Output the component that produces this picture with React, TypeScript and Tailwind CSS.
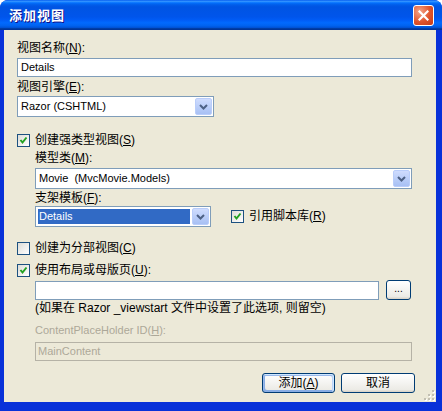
import type { ReactNode } from "react";

const ui = "font-['Liberation_Sans','Noto_Sans_CJK_SC',sans-serif]";

function Acc({ k }: { k: string }) {
  return <span className="underline underline-offset-[1px]">{k}</span>;
}

function Check({ checked }: { checked?: boolean }) {
  return (
    <span className="w-[13px] h-[13px] shrink-0 border border-[#1c5180] bg-[linear-gradient(135deg,#dcdcd7,#ffffff)] flex items-center justify-center">
      {checked && (
        <svg width="9" height="9" viewBox="0 0 9 9">
          <path d="M1.5 4 L3.5 6.5 L7.5 1.5" stroke="#21a121" strokeWidth="2" fill="none" />
        </svg>
      )}
    </span>
  );
}

function DropButton() {
  return (
    <span className="w-[17px] h-full shrink-0 rounded-[2px] border border-[#b9cdfa] bg-[linear-gradient(180deg,#cfdcfe,#b9cdf8_55%,#a8c0f4)] flex items-center justify-center">
      <svg width="9" height="6" viewBox="0 0 9 6">
        <path d="M1 1 L4.5 4.5 L8 1" stroke="#4d6185" strokeWidth="2" fill="none" />
      </svg>
    </span>
  );
}

function Select({ value, width, selected }: { value: string; width: string; selected?: boolean }) {
  return (
    <div className={`${width} h-[21px] border border-[#7f9db9] bg-white flex p-[1px] shrink-0`}>
      <div className="flex-1 flex items-center pl-[1px] pr-[2px] min-w-0">
        <span
          className={`flex-1 h-[15px] flex items-center text-[11px] pl-[1px] whitespace-pre ${
            selected ? "bg-[#316ac5] text-white" : "text-black"
          }`}
        >
          {value}
        </span>
      </div>
      <DropButton />
    </div>
  );
}

function Label({ children, muted }: { children: ReactNode; muted?: boolean }) {
  return (
    <div className={`h-[16px] leading-[16px] text-[12px] ${muted ? "text-[#aca899]" : "text-black"}`}>
      {children}
    </div>
  );
}

function CheckRow({ checked, children }: { checked?: boolean; children: ReactNode }) {
  return (
    <div className="h-[16px] flex items-center gap-[5px] text-[12px] text-black">
      <Check checked={checked} />
      <span className="leading-[16px]">{children}</span>
    </div>
  );
}

function Button({ children, primary }: { children: ReactNode; primary?: boolean }) {
  return (
    <button
      className={`h-[20px] rounded-[3px] border border-[#003c74] bg-[linear-gradient(180deg,#ffffff,#ecebe6_86%,#d6d0c5)] text-[12px] text-black leading-none flex items-center justify-center ${
        primary
          ? "w-[73px] shadow-[inset_-1px_1px_#cee7ff,inset_1px_2px_#98b8ea,inset_-2px_2px_#bcd4f6,inset_1px_-1px_#89ade4,inset_2px_-2px_#89ade4]"
          : "w-[74px]"
      }`}
    >
      {children}
    </button>
  );
}

export default function App() {
  return (
    <div className={`${ui} w-[442px] h-[411px] flex flex-col bg-[#0831d9] rounded-t-[8px] overflow-hidden select-none`}>
      {/* Title bar */}
      <div className="h-[30px] shrink-0 flex items-center justify-between pl-[9px] pr-[8px] bg-[linear-gradient(180deg,#0058ee_0%,#3593ff_4%,#288eff_6%,#127dff_8%,#036ffc_10%,#0262ee_14%,#0057e5_20%,#0054e3_24%,#0055eb_56%,#005bf5_66%,#026afe_76%,#0062ef_86%,#0052d6_92%,#0040ab_94%,#003092_100%)]">
        <span className="text-white font-bold text-[13px] tracking-[1px] [text-shadow:1px_1px_#0f1089] mt-[1px]">
          添加视图
        </span>
        <span className="w-[21px] h-[21px] rounded-[3px] border border-white bg-[radial-gradient(circle_at_30%_30%,#f3a58a,#e0542c_55%,#c53a16)] flex items-center justify-center mb-[-1px]">
          <svg width="11" height="11" viewBox="0 0 11 11">
            <path d="M1.5 1.5 L9.5 9.5 M9.5 1.5 L1.5 9.5" stroke="white" strokeWidth="2.2" strokeLinecap="square" />
          </svg>
        </span>
      </div>

      {/* Body */}
      <div className="relative flex-1 ml-[4px] mr-[6px] mb-[9px] bg-[#ece9d8] pl-[13px] pr-[24px] pt-[10px] flex flex-col">
        <Label>
          视图名称(<Acc k="N" />):
        </Label>
        <div className="mt-[2px] h-[19px] border border-[#7f9db9] bg-white flex items-center pl-[3px] text-[11px] text-black">
          Details
        </div>
        <div className="mt-[2px]">
          <Label>
            视图引擎(<Acc k="E" />):
          </Label>
        </div>
        <div className="mt-[1px]">
          <Select value="Razor (CSHTML)" width="w-[197px]" />
        </div>

        <div className="mt-[15px]">
          <CheckRow checked>
            创建强类型视图(<Acc k="S" />)
          </CheckRow>
        </div>

        <div className="ml-[18px] flex flex-col">
          <div className="mt-[2px]">
            <Label>
              模型类(<Acc k="M" />):
            </Label>
          </div>
          <div className="mt-[2px]">
            <Select value="Movie  (MvcMovie.Models)" width="w-full" />
          </div>
          <div className="mt-[1px]">
            <Label>
              支架模板(<Acc k="F" />):
            </Label>
          </div>
          <div className="flex items-center">
            <Select value="Details" width="w-[176px]" selected />
            <div className="ml-[20px] mt-[-1px]">
              <CheckRow checked>
                引用脚本库(<Acc k="R" />)
              </CheckRow>
            </div>
          </div>
        </div>

        <div className="mt-[13px]">
          <CheckRow>
            创建为分部视图(<Acc k="C" />)
          </CheckRow>
        </div>
        <div className="mt-[6px]">
          <CheckRow checked>
            使用布局或母版页(<Acc k="U" />):
          </CheckRow>
        </div>

        <div className="ml-[18px] flex flex-col">
          <div className="mt-[2px] h-[20px] flex items-center">
            <div className="w-[344px] h-[19px] border border-[#7f9db9] bg-white" />
            <button className="ml-[7px] w-[25px] h-[20px] rounded-[3px] border border-[#003c74] bg-[linear-gradient(180deg,#ffffff,#ecebe6_86%,#d6d0c5)] text-[10px] text-black leading-none pb-[3px]">
              ...
            </button>
          </div>
          <Label>(如果在 Razor _viewstart 文件中设置了此选项, 则留空)</Label>
          <div className="mt-[6px] h-[16px] leading-[16px] text-[11px] text-[#aca899]">
            ContentPlaceHolder ID(<Acc k="H" />):
          </div>
          <div className="mt-[4px] h-[19px] border border-[#b5b2a6] bg-[#ece9d8] flex items-center pl-[2px] text-[11px] text-[#aca899]">
            MainContent
          </div>
        </div>

        <div className="mt-[12px] mr-[-3px] flex justify-end gap-[6px]">
          <Button primary>
            添加(<Acc k="A" />)
          </Button>
          <Button>取消</Button>
        </div>

        {/* resize grip */}
        <svg className="absolute right-[1px] bottom-[1px]" width="12" height="12" viewBox="0 0 12 12">
          {[
            [9, 1],
            [9, 5],
            [5, 5],
            [9, 9],
            [5, 9],
            [1, 9],
          ].map(([x, y]) => (
            <g key={`${x}-${y}`}>
              <rect x={x + 1} y={y + 1} width="2" height="2" fill="#ffffff" />
              <rect x={x} y={y} width="2" height="2" fill="#c2bfb2" />
            </g>
          ))}
        </svg>
      </div>
    </div>
  );
}
